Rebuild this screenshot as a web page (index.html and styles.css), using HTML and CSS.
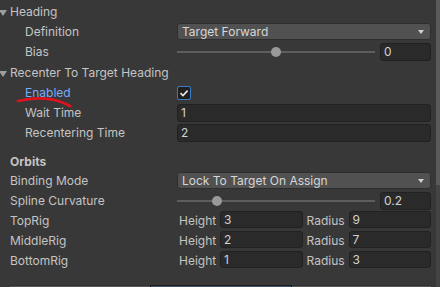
FILE: index.html
```html
<!DOCTYPE html>
<html lang="en">
<head>
  <meta charset="UTF-8" />
  <title>Inspector - Orbital Transposer</title>
  <link rel="stylesheet" href="styles.css">
</head>
<body>
  <div class="inspector">
    <div class="content">
      <div class="row foldout">
        <span class="arrow"></span>
        <span class="label">Heading</span>
      </div>
      <div class="row sub">
        <span class="label">Definition</span>
        <div class="dropdown">Target Forward<span class="caret"></span></div>
      </div>
      <div class="row sub">
        <span class="label">Bias</span>
        <div class="slider">
          <div class="track"><span class="thumb" style="left: 50%"></span></div>
          <div class="field small">0</div>
        </div>
      </div>
      <div class="row foldout gap-top">
        <span class="arrow"></span>
        <span class="label">Recenter To Target Heading</span>
      </div>
      <div class="row sub">
        <span class="label changed">Enabled</span>
        <span class="checkbox">
          <svg width="10" height="10" viewBox="0 0 10 10"><path d="M1.5 5.2 L4 7.6 L8.6 2.6" fill="none" stroke="#e8e8e8" stroke-width="1.6"/></svg>
        </span>
      </div>
      <div class="row sub">
        <span class="label">Wait Time</span>
        <div class="field">1</div>
      </div>
      <div class="row sub">
        <span class="label">Recentering Time</span>
        <div class="field">2</div>
      </div>

      <div class="row section">Orbits</div>
      <div class="row">
        <span class="label">Binding Mode</span>
        <div class="dropdown">Lock To Target On Assign<span class="caret"></span></div>
      </div>
      <div class="row">
        <span class="label">Spline Curvature</span>
        <div class="slider">
          <div class="track"><span class="thumb" style="left: 20%"></span></div>
          <div class="field small">0.2</div>
        </div>
      </div>
      <div class="row rig">
        <span class="label">TopRig</span>
        <span class="mini">Height</span><div class="field">3</div>
        <span class="mini second">Radius</span><div class="field">9</div>
      </div>
      <div class="row rig">
        <span class="label">MiddleRig</span>
        <span class="mini">Height</span><div class="field">2</div>
        <span class="mini second">Radius</span><div class="field">7</div>
      </div>
      <div class="row rig">
        <span class="label">BottomRig</span>
        <span class="mini">Height</span><div class="field">1</div>
        <span class="mini second">Radius</span><div class="field">3</div>
      </div>

      <div class="buttons">
        <div class="btn"></div>
        <div class="btn active"></div>
        <div class="btn"></div>
      </div>
    </div>
    <div class="scrollbar"><div class="scroll-thumb"></div></div>
  </div>

  <!-- annotation: red marker stroke under "Enabled" -->
  <svg class="marker" width="80" height="20" viewBox="0 0 80 20">
    <path d="M18 11 Q36 6.5 52 9.5 Q63 12 70 16" fill="none" stroke="#e0121c" stroke-width="2.8" stroke-linecap="round"/>
  </svg>
</body>
</html>
```
FILE: styles.css
```css
html, body {
  margin: 0;
  height: 100%;
  overflow: hidden;
}
body {
  background: #383838;
  color: #c4c4c4;
  font-family: Inter, "Noto Sans", sans-serif;
  font-size: 12px;
}
.inspector {
  display: flex;
  height: 287px;
}
.content {
  flex: 1;
  display: flex;
  flex-direction: column;
  gap: 2px;
  padding: 3px 5px 0 0;
}
.row {
  display: flex;
  align-items: flex-start;
  height: 18px;
  line-height: 18px;
  position: relative;
}
.label {
  width: 167px;
  padding-left: 10px;
  flex: none;
  white-space: nowrap;
}
.sub .label {
  width: 152px;
  padding-left: 25px;
}
.label.changed {
  color: #7babf5;
}
.foldout .label {
  width: auto;
}
.gap-top {
  margin-top: 1px;
}
.arrow {
  position: absolute;
  left: -1px;
  top: 7px;
  width: 0;
  height: 0;
  border-left: 4px solid transparent;
  border-right: 4px solid transparent;
  border-top: 6px solid #9e9e9e;
}
.section {
  margin-top: 10px;
  height: 16px;
  line-height: 16px;
  padding-left: 10px;
  font-weight: 700;
}

/* controls */
.dropdown {
  flex: 1;
  height: 15px;
  line-height: 15px;
  background: #515151;
  border: 1px solid #2e2e2e;
  border-radius: 3px;
  padding-left: 4px;
  color: #d6d6d6;
  position: relative;
}
.caret {
  position: absolute;
  right: 6px;
  top: 6px;
  border-left: 3px solid transparent;
  border-right: 3px solid transparent;
  border-top: 4px solid #d0d0d0;
}
.field {
  flex: 1;
  height: 16px;
  line-height: 16px;
  background: #2a2a2a;
  border: 1px solid #212121;
  border-radius: 3px;
  padding-left: 3px;
  color: #d2d2d2;
  box-sizing: content-box;
}
.field.small {
  flex: none;
  width: 46px;
}
.slider {
  flex: 1;
  display: flex;
  align-items: center;
  gap: 5px;
  height: 18px;
}
.track {
  flex: 1;
  height: 2px;
  background: #5e5e5e;
  position: relative;
}
.thumb {
  position: absolute;
  top: -4px;
  width: 10px;
  height: 10px;
  margin-left: -5px;
  border-radius: 50%;
  background: #999;
}
.checkbox {
  width: 12px;
  height: 12px;
  margin-top: 2px;
  border: 1px solid #3d7cc4;
  border-radius: 2px;
  background: #1f1f1f;
  display: flex;
  align-items: center;
  justify-content: center;
}
.rig .field {
  flex: 1 1 0;
  height: 15px;
  line-height: 15px;
  margin-top: -1px;
}
.rig .label {
  width: 168px;
}
.mini {
  flex: none;
  width: 41px;
  padding-left: 1px;
}
.mini.second {
  width: 42px;
  padding-left: 4px;
}

/* bottom buttons, only their tops are visible */
.buttons {
  display: flex;
  margin-top: 13px;
  padding-left: 10px;
}
.btn {
  flex: 1;
  height: 10px;
  background: #585858;
  border-top: 1px solid #303030;
}
.btn.active {
  flex: none;
  width: 140px;
  background: #43566a;
  border: 1px solid #1c1c1c;
}
.scrollbar {
  width: 4px;
  background: #444;
}
.scroll-thumb {
  height: 185px;
  background: #5a5a5a;
}
.marker {
  position: absolute;
  left: 0;
  top: 90px;
}
```
